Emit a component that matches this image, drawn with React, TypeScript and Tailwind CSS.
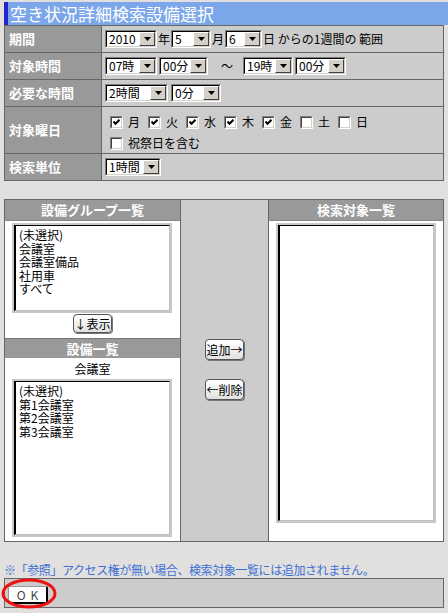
import type { ReactNode } from 'react'

function Select({ value, className }: { value: string; className: string }) {
  return (
    <div
      className={
        'flex h-[18px] shrink-0 border-t border-l border-r border-b border-t-[#808080] border-l-[#808080] border-r-white border-b-white ' +
        className
      }
    >
      <div className="flex flex-1 items-center border-t border-l border-r border-b border-t-[#000] border-l-[#000] border-r-[#d4d0c8] border-b-[#d4d0c8] bg-white">
        <span className="flex-1 whitespace-nowrap pl-[2px] text-[12px] leading-[12px]">{value}</span>
        <span className="flex h-full w-[16px] items-center justify-center border-t border-l border-r border-b border-t-[#ffffff] border-l-[#ffffff] border-r-[#404040] border-b-[#404040] bg-[#d4d0c8]">
          <svg width="7" height="4" viewBox="0 0 7 4">
            <path d="M0 0 H7 L3.5 4 Z" fill="#000" />
          </svg>
        </span>
      </div>
    </div>
  )
}

function Check({ on, label }: { on: boolean; label: string }) {
  return (
    <span className="flex items-center">
      <span className="flex h-[13px] w-[13px] border-t border-l border-r border-b border-t-[#808080] border-l-[#808080] border-r-white border-b-white">
        <span className="flex flex-1 items-center justify-center border-t border-l border-r border-b border-t-[#404040] border-l-[#404040] border-r-[#d4d0c8] border-b-[#d4d0c8] bg-white">
          {on && (
            <svg width="7" height="7" viewBox="0 0 7 7">
              <path d="M0.5 2.5 L2.5 4.8 L6.5 0.8" fill="none" stroke="#000" strokeWidth="2" />
            </svg>
          )}
        </span>
      </span>
      <span className="ml-[5px] text-[12px] leading-[14px]">{label}</span>
    </span>
  )
}

function Btn({ children, className }: { children: ReactNode; className: string }) {
  return (
    <div
      className={
        'flex items-center justify-center rounded-[4px] border border-[#555] bg-linear-to-b from-white to-[#e2e2e2] text-[12px] leading-none shadow-[1px_1px_0_#777] ' +
        className
      }
    >
      {children}
    </div>
  )
}

function ListBox({ items, className }: { items: string[]; className: string }) {
  return (
    <div className={'flex border-2 border-[#c8c8c8] ' + className}>
      <div className="flex-1 border-t border-l-2 border-r border-b border-t-black border-l-black border-r-[#c0c0c0] border-b-[#c0c0c0] bg-white pl-[3px] pt-[2px]">
        {items.map((it) => (
          <div key={it} className="h-[13.5px] text-[12px] leading-[13.5px]">
            {it}
          </div>
        ))}
      </div>
    </div>
  )
}

function Label({ children }: { children: ReactNode }) {
  return (
    <div className="flex items-center bg-[#999999] pl-[4px] text-[13px] font-bold text-white">{children}</div>
  )
}

function Cell({ children }: { children: ReactNode }) {
  return <div className="flex items-center bg-[#cccccc] pl-[3px] text-[12px]">{children}</div>
}

function Head({ children }: { children: ReactNode }) {
  return (
    <div className="flex h-[21px] items-center justify-center border-b border-[#888] bg-[#999999] text-[13px] font-bold text-white">
      {children}
    </div>
  )
}

export default function App() {
  return (
    <div className="relative min-h-[613px] w-[448px] bg-[#e1e0de] pt-[2px] font-['Noto_Sans_CJK_JP',sans-serif] text-[12px] text-black">
      <div className="ml-[4px] flex h-[23px] items-center border-l-[4px] border-[#2424c8] bg-[#7ba6ea] pl-[2px] text-[17px] leading-none text-white">
        空き状況詳細検索設備選択
      </div>

      <div className="ml-[4px] grid w-[440px] grid-cols-[96px_1fr] grid-rows-[26px_26px_26px_46px_26px] gap-px bg-[#666666] p-px">
        <Label>期間</Label>
        <Cell>
          <Select value="2010" className="w-[52px]" />
          <span className="mx-[1px]">年</span>
          <Select value="5" className="w-[40px]" />
          <span className="mx-[1px]">月</span>
          <Select value="6" className="w-[37px]" />
          <span className="ml-[1px]">日 からの1週間の 範囲</span>
        </Cell>

        <Label>対象時間</Label>
        <Cell>
          <Select value="07時" className="w-[52px]" />
          <Select value="00分" className="ml-[2px] w-[49px]" />
          <span className="ml-[13px] mr-[10px]">～</span>
          <Select value="19時" className="w-[50px]" />
          <Select value="00分" className="ml-[2px] w-[51px]" />
        </Cell>

        <Label>必要な時間</Label>
        <Cell>
          <Select value="2時間" className="w-[63px]" />
          <Select value="0分" className="ml-[3px] w-[50px]" />
        </Cell>

        <Label>対象曜日</Label>
        <div className="flex flex-col gap-[7px] bg-[#cccccc] pl-[8px] pt-[8px]">
          <div className="flex gap-[8px]">
            <Check on label="月" />
            <Check on label="火" />
            <Check on label="水" />
            <Check on label="木" />
            <Check on label="金" />
            <Check on={false} label="土" />
            <Check on={false} label="日" />
          </div>
          <div className="flex">
            <Check on={false} label="祝祭日を含む" />
          </div>
        </div>

        <Label>検索単位</Label>
        <Cell>
          <Select value="1時間" className="w-[56px]" />
        </Cell>
      </div>

      <div className="ml-[4px] mt-[18px] grid h-[343px] w-[440px] grid-cols-[175px_87px_174px] gap-px bg-[#666666] p-px">
        <div className="flex flex-col bg-white">
          <Head>設備グループ一覧</Head>
          <ListBox items={['(未選択)', '会議室', '会議室備品', '社用車', 'すべて']} className="ml-[7px] mt-[2px] h-[90px] w-[160px]" />
          <div className="mt-[1px] flex justify-center">
            <Btn className="h-[19px] w-[39px]">↓表示</Btn>
          </div>
          <div className="mt-[5px] flex h-[20px] items-center justify-center border-t border-[#777] bg-[#999999] text-[13px] font-bold text-white">
            設備一覧
          </div>
          <div className="flex h-[21px] items-center justify-center text-[12px]">会議室</div>
          <ListBox items={['(未選択)', '第1会議室', '第2会議室', '第3会議室']} className="mb-[4px] ml-[7px] w-[160px] flex-1" />
        </div>

        <div className="flex flex-col items-center bg-[#cccccc] pt-[139px]">
          <Btn className="h-[21px] w-[39px]">追加→</Btn>
          <Btn className="mt-[19px] h-[21px] w-[39px]">←削除</Btn>
        </div>

        <div className="flex flex-col bg-white">
          <Head>検索対象一覧</Head>
          <ListBox items={[]} className="ml-[7px] mt-[2px] h-[300px] w-[160px]" />
        </div>
      </div>

      <div className="ml-[4px] mt-[20px] h-[16px] text-[12px] leading-[16px] tracking-[-0.4px] text-[#3d6fd6]">
        ※「参照」アクセス権が無い場合、検索対象一覧には追加されません。
      </div>

      <div className="ml-[4px] h-[30px] w-[440px] border border-[#666666] bg-[#cccccc] pl-[3px] pt-[7px]">
        <div className="flex h-[18px] w-[40px] items-center justify-center rounded-[2px] border-t border-l border-r-2 border-b-2 border-t-[#999] border-l-[#999] border-r-black border-b-black bg-white text-[12px] leading-none text-[#444]">
          <span className="tracking-[5px] pl-[5px]">OK</span>
        </div>
      </div>

      <svg className="absolute left-[1px] top-[578px]" width="56" height="31" viewBox="0 0 56 31">
        <ellipse cx="28" cy="15.5" rx="26" ry="13.5" fill="none" stroke="#ee1111" strokeWidth="3" />
      </svg>
    </div>
  )
}
